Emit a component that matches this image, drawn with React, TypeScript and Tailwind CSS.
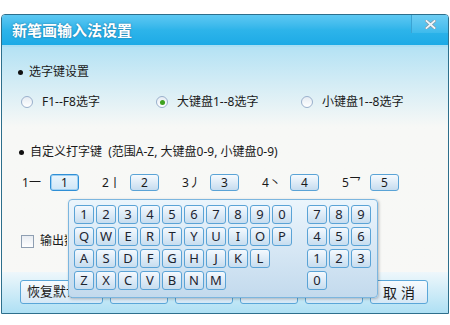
import React from "react";

const font = { fontFamily: '"Noto Sans", "Noto Sans CJK SC", sans-serif' };

function Radio({ checked }: { checked?: boolean }) {
  return (
    <div className="w-[12px] h-[12px] rounded-full border border-[#9ab0cc] bg-gradient-to-b from-[#e6ecf3] to-white flex items-center justify-center shrink-0">
      {checked && <div className="w-[5px] h-[5px] rounded-full bg-[#3ea21e]" />}
    </div>
  );
}

function Key({ label, w = "w-[20px]" }: { label: string; w?: string }) {
  return (
    <div
      className={`${w} h-[19px] rounded-[3px] border border-[#5aa3d6] bg-gradient-to-b from-[#f4f9fe] to-[#c7ddef] flex items-center justify-center text-[13px] leading-none text-[#1c2430]`}
    >
      {label}
    </div>
  );
}

function Spacer() {
  return <div className="w-[20px] h-[19px]" />;
}

export default function App() {
  const row1 = ["1", "2", "3", "4", "5", "6", "7", "8", "9", "0"];
  const row2 = ["Q", "W", "E", "R", "T", "Y", "U", "I", "O", "P"];
  const row3 = ["A", "S", "D", "F", "G", "H", "J", "K", "L"];
  const row4 = ["Z", "X", "C", "V", "B", "N", "M"];
  const pad = [["7", "8", "9"], ["4", "5", "6"], ["1", "2", "3"], ["0"]];
  const groups = [
    ["1", "一"],
    ["2", "丨"],
    ["3", "丿"],
    ["4", "丶"],
    ["5", "乛"],
  ];
  return (
    <div className="w-[450px] h-[325px] bg-white relative overflow-hidden text-[#1a1a1a]" style={font}>
      <div className="ml-[1px] mt-[14px] w-[448px] h-[300px] border border-[#2d6f8c] rounded-t-[4px] flex flex-col overflow-hidden">
        {/* title bar */}
        <div className="h-[30px] shrink-0 bg-gradient-to-b from-[#5cc8f2] via-[#2db4ea] to-[#1caae6] flex items-center justify-between">
          <div
            className="pl-[10px] text-[15px] font-bold text-white leading-none"
            style={{ textShadow: "0 0 2px rgba(0,60,100,0.6)" }}
          >
            新笔画输入法设置
          </div>
          <div className="self-start w-[37px] h-[18px] border-l border-[#3aa4d4] bg-gradient-to-b from-[#6dcdf3] to-[#3dbaec] flex items-center justify-center">
            <svg width="11" height="9" viewBox="0 0 11 9">
              <path d="M1.5 1 L9.5 8 M9.5 1 L1.5 8" stroke="#7d97a8" strokeWidth="3.2" strokeLinecap="square" />
              <path d="M1.5 1 L9.5 8 M9.5 1 L1.5 8" stroke="#eef6fa" strokeWidth="1.8" strokeLinecap="square" />
            </svg>
          </div>
        </div>
        <div className="h-[2px] shrink-0 bg-[#a9def3]" />
        {/* body */}
        <div className="flex-1 flex flex-col bg-gradient-to-b from-[#b4e2f4] via-[#f7f8f6] via-[30%] to-[#f8f8f6]">
          <div className="mt-[17px] h-[16px] pl-[16px] flex items-center text-[12px]">
            <div className="w-[5px] h-[5px] rounded-full bg-[#111] mr-[6px]" />
            <span>选字键设置</span>
          </div>
          <div className="mt-[14px] h-[16px] pl-[19px] flex items-center text-[12px]">
            <div className="w-[135px] flex items-center gap-[9px]">
              <Radio />
              <span>F1--F8选字</span>
            </div>
            <div className="w-[145px] flex items-center gap-[9px]">
              <Radio checked />
              <span>大键盘1--8选字</span>
            </div>
            <div className="flex items-center gap-[9px]">
              <Radio />
              <span>小键盘1--8选字</span>
            </div>
          </div>
          <div className="mt-[34px] h-[16px] pl-[17px] flex items-center text-[12px]">
            <div className="w-[5px] h-[5px] rounded-full bg-[#111] mr-[6px]" />
            <span>自定义打字键&nbsp;&nbsp;(范围A-Z, 大键盘0-9, 小键盘0-9)</span>
          </div>
          <div className="mt-[14px] h-[17px] pl-[20px] flex items-center text-[12px]">
            {groups.map(([n, s], i) => (
              <div key={i} className="w-[80px] flex items-center">
                <span className="w-[28px]">
                  {n}
                  {s}
                </span>
                <div
                  className={`w-[29px] h-[17px] rounded-[3px] border flex items-center justify-center text-[12px] ${
                    i === 0
                      ? "border-[#2f8fd6] bg-gradient-to-b from-[#eaf5fd] to-[#cfe6f7] shadow-[inset_0_0_0_1px_#9fd0f2]"
                      : "border-[#5aa3d6] bg-gradient-to-b from-[#f6fafe] to-[#c6dcef]"
                  }`}
                >
                  {n}
                </div>
              </div>
            ))}
          </div>
          <div className="mt-[43px] h-[14px] pl-[19px] flex items-center text-[12px]">
            <div className="w-[13px] h-[13px] border border-[#8f9fb2] bg-gradient-to-b from-[#e9edf2] to-white mr-[6px]" />
            <span className="w-[27px] overflow-hidden whitespace-nowrap">输出数字</span>
          </div>
          <div className="mt-auto h-[41px] bg-gradient-to-b from-[#eef7fb] to-[#aee0f4] pl-[18px] pt-[8px] flex gap-[7px]">
            <div className="w-[83px] h-[24px] rounded-[3px] border border-[#5aa6d8] bg-gradient-to-b from-[#f7fbfe] to-[#d5e8f6] flex items-center pl-[6px] text-[13px]">
              恢复默认
            </div>
            {[0, 1, 2, 3].map((i) => (
              <div
                key={i}
                className="w-[58px] h-[24px] rounded-[3px] border border-[#5aa6d8] bg-gradient-to-b from-[#f7fbfe] to-[#d5e8f6]"
              />
            ))}
            <div className="w-[58px] h-[24px] rounded-[3px] border border-[#5aa6d8] bg-gradient-to-b from-[#f7fbfe] to-[#d5e8f6] flex items-center justify-center text-[14px] tracking-[4px] pl-[4px]">
              取消
            </div>
          </div>
        </div>
      </div>
      {/* popup keyboard */}
      <div className="absolute left-[68px] top-[199px] w-[310px] h-[99px] rounded-[4px] border border-[#7cb6df] bg-gradient-to-b from-[#ebf5fc] to-[#c3daed] shadow-[1px_1px_3px_rgba(0,0,0,0.25)] pl-[5px] pt-[5px] flex gap-[15px]">
        <div className="flex flex-col gap-[3px]">
          {[row1, row2, row3, row4].map((r, i) => (
            <div key={i} className="flex gap-[2px]">
              {r.map((k) => (
                <Key key={k} label={k} />
              ))}
            </div>
          ))}
        </div>
        <div className="flex flex-col gap-[3px]">
          {pad.map((r, i) => (
            <div key={i} className="flex gap-[2px]">
              {r.map((k) => (
                <Key key={k} label={k} />
              ))}
              {r.length < 3 && <Spacer />}
            </div>
          ))}
        </div>
      </div>
    </div>
  );
}
